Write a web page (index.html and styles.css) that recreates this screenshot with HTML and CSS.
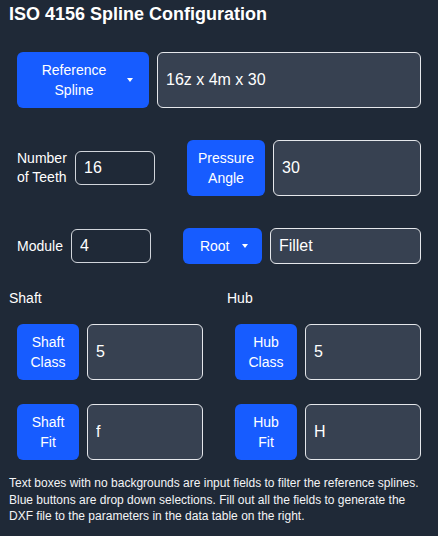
FILE: index.html
```html
<!DOCTYPE html>
<html lang="en">

<head>
  <meta charset="UTF-8" />
  <meta name="viewport" content="width=device-width, initial-scale=1.0" />
  <title>ISO 4156 Spline Configuration</title>
  <link rel="stylesheet" href="styles.css">
</head>

<body>
  <main class="config">
    <h1 class="title">ISO 4156 Spline Configuration</h1>

    <div class="row row-first">
      <button class="btn btn-select btn-ref"><span>Reference Spline</span><i class="caret"></i></button>
      <input class="field" type="text" value="16z x 4m x 30">
    </div>

    <div class="row row-teeth">
      <label class="field-label label-teeth">Number of Teeth</label>
      <input class="field field-plain" type="text" value="16">
      <button class="btn btn-pressure">Pressure Angle</button>
      <input class="field" type="text" value="30">
    </div>

    <div class="row row-module">
      <label class="field-label">Module</label>
      <input class="field field-plain" type="text" value="4">
      <button class="btn btn-select btn-root"><span>Root</span><i class="caret"></i></button>
      <input class="field" type="text" value="Fillet">
    </div>

    <section class="fits">
      <div class="fit-col">
        <div class="fit-title">Shaft</div>
        <div class="fit-row">
          <button class="btn btn-fit">Shaft Class</button>
          <input class="field" type="text" value="5">
        </div>
        <div class="fit-row">
          <button class="btn btn-fit">Shaft Fit</button>
          <input class="field" type="text" value="f">
        </div>
      </div>
      <div class="fit-col">
        <div class="fit-title">Hub</div>
        <div class="fit-row">
          <button class="btn btn-fit">Hub Class</button>
          <input class="field" type="text" value="5">
        </div>
        <div class="fit-row">
          <button class="btn btn-fit">Hub Fit</button>
          <input class="field" type="text" value="H">
        </div>
      </div>
    </section>

    <p class="note">Text boxes with no backgrounds are input fields to filter the reference splines. Blue buttons are drop down selections. Fill out all the fields to generate the DXF file to the parameters in the data table on the right.</p>
  </main>
</body>

</html>
```

FILE: styles.css
```css
body {
  margin: 0;
  font-family: 'Liberation Sans', Arial, sans-serif;
  background-color: #1f2937;
  color: #fff;
}

.config {
  padding: 4px 9px 0;
}

.title {
  margin: 0;
  font-size: 18px;
  line-height: 21px;
  font-weight: 700;
}

.row {
  display: flex;
  align-items: center;
  gap: 8px;
  padding: 0 8px;
  margin-top: 32px;
}

.row-first {
  margin-top: 27px;
  height: 56px;
}

.row-teeth {
  height: 56px;
}

.row-module {
  height: 36px;
}

.btn {
  font-family: inherit;
  font-size: 14px;
  line-height: 20px;
  color: #fff;
  background-color: #175cff;
  border: none;
  border-radius: 6px;
  height: 100%;
  padding: 0;
}

.btn-select {
  display: flex;
  align-items: center;
}

.btn-select span {
  flex: 1;
  text-align: center;
}

.caret {
  width: 0;
  height: 0;
  border-left: 3.5px solid transparent;
  border-right: 3.5px solid transparent;
  border-top: 4px solid #fff;
}

.btn-ref {
  width: 132px;
  padding: 0 16px 0 12px;
  gap: 8px;
}

.btn-ref span {
  padding: 0 4px;
}

.btn-root {
  width: 79px;
  padding: 0 16px 0 17px;
  gap: 12px;
}

.btn-pressure {
  width: 78px;
  margin-left: 24px;
}

.btn-root {
  margin-left: 24px;
}

.field {
  flex: 1;
  min-width: 0;
  width: 0;
  height: 100%;
  box-sizing: border-box;
  font-family: inherit;
  font-size: 16px;
  color: #fff;
  background-color: #374151;
  border: 1px solid #e5e7eb;
  border-radius: 6px;
  padding: 0 8px;
  outline: none;
}

.field-plain {
  flex: none;
  width: 80px;
  height: 34px;
  background-color: transparent;
  border-color: #d1d5db;
}

.field-label {
  font-size: 14px;
  line-height: 19px;
}

.label-teeth {
  width: 50px;
}

.fits {
  display: grid;
  grid-template-columns: repeat(2, minmax(0, 1fr));
  column-gap: 16px;
  margin-top: 24px;
}

.fit-title {
  font-size: 14px;
  line-height: 20px;
}

.fit-row {
  display: flex;
  gap: 8px;
  height: 56px;
  padding: 0 8px;
  margin-top: 24px;
}

.fit-col .fit-row:nth-child(2) {
  margin-top: 16px;
}

.btn-fit {
  flex: none;
  width: 62px;
  padding: 0 12px;
}

.note {
  margin: 15px 0 0;
  font-size: 12px;
  line-height: 16.5px;
  color: #f3f4f6;
}
```
